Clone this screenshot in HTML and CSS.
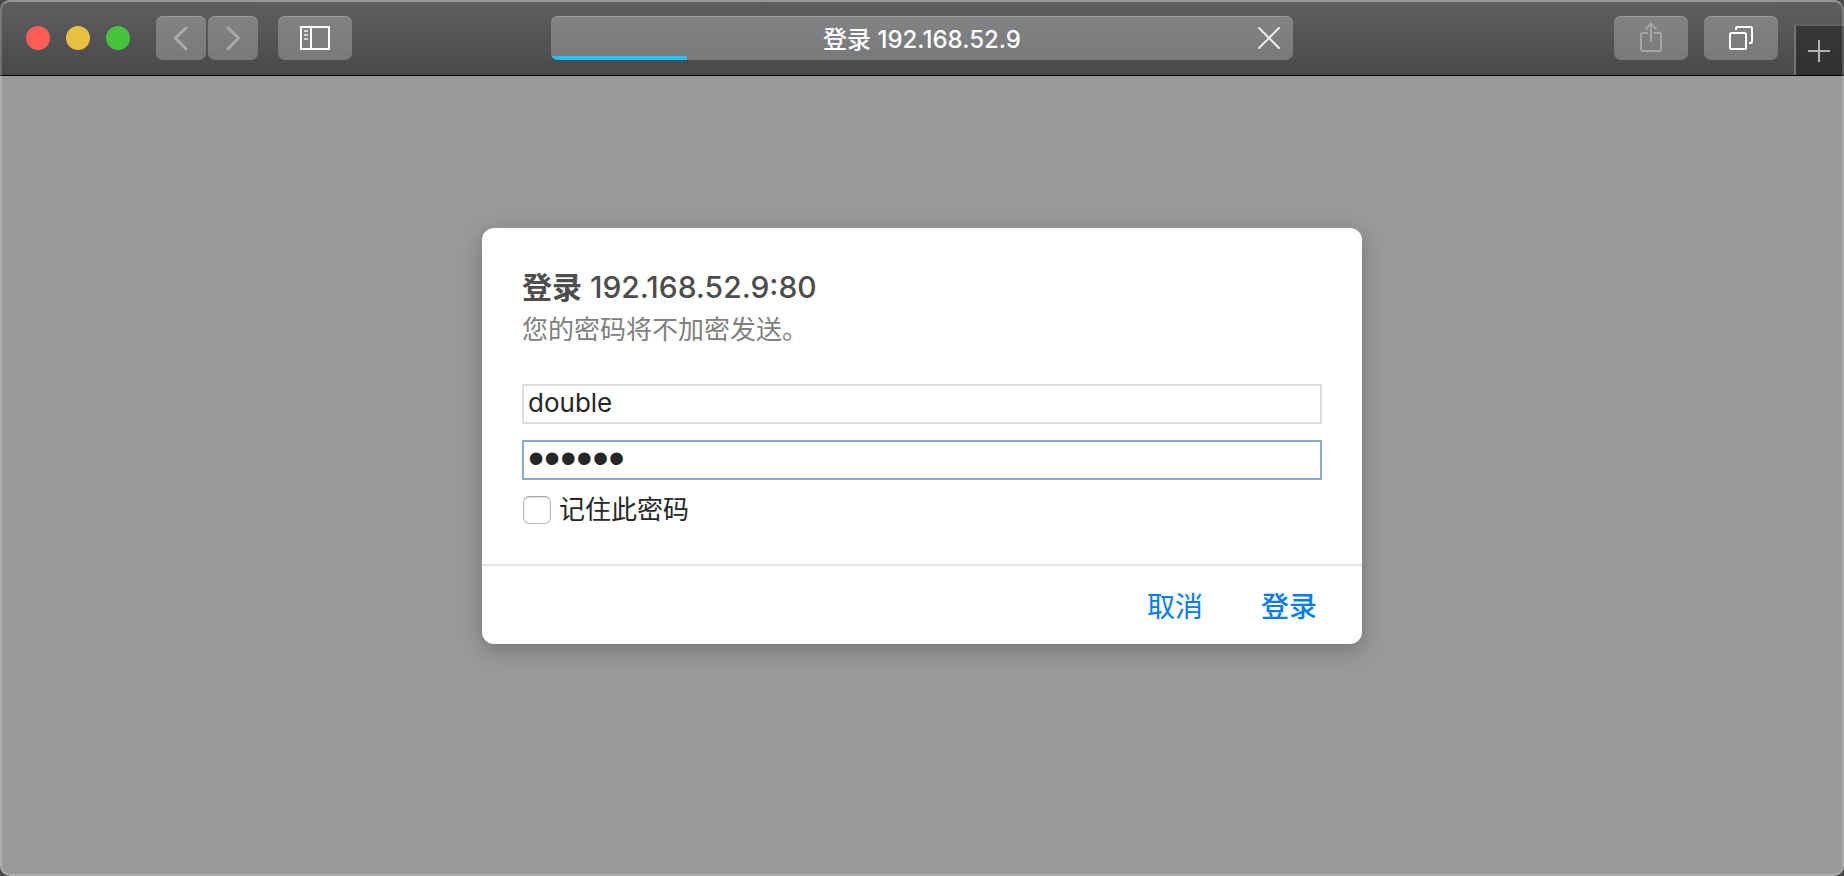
FILE: index.html
```html
<!DOCTYPE html>
<html lang="zh-CN">
<head>
<meta charset="utf-8">
<meta name="viewport" content="width=device-width, initial-scale=1">
<title>登录 192.168.52.9</title>
<link rel="stylesheet" href="styles.css">
</head>
<body>
<div class="window">
  <header class="toolbar">
    <div class="toolbar-left">
      <div class="lights">
        <button class="light light-close" aria-label="关闭"></button>
        <button class="light light-min" aria-label="最小化"></button>
        <button class="light light-zoom" aria-label="缩放"></button>
      </div>
      <div class="nav">
        <button class="tool tool-nav" aria-label="后退">
          <svg width="50" height="44" viewBox="0 0 50 44" fill="none" stroke="#a9aaac" stroke-width="3" stroke-linecap="round"><path d="M30 12 19.500 22 30 33"/></svg>
        </button>
        <button class="tool tool-nav" aria-label="前进">
          <svg width="50" height="44" viewBox="0 0 50 44" fill="none" stroke="#a9aaac" stroke-width="3" stroke-linecap="round"><path d="M20 12 30.500 22 20 33"/></svg>
        </button>
      </div>
      <button class="tool" aria-label="边栏">
        <svg width="74" height="44" viewBox="0 0 74 44" fill="none" stroke="#fff" stroke-width="2"><rect x="23" y="11" width="28" height="22"/><path d="M33 11v22"/><path d="M26 15h4M26 19h4M26 23h4" stroke="#d5d5d6"/></svg>
      </button>
    </div>
    <div class="address">
      <span class="address-text">登录 192.168.52.9</span>
      <button class="stop" aria-label="停止载入">
        <svg width="44" height="44" viewBox="0 0 44 44" fill="none" stroke="#ececec" stroke-width="2" stroke-linecap="round"><path d="M10 12 30 32M30 12 10 32"/></svg>
      </button>
      <span class="progress"></span>
    </div>
    <div class="toolbar-right">
      <button class="tool" aria-label="共享">
        <svg width="74" height="44" viewBox="0 0 74 44" fill="none" stroke="#a5a6a8" stroke-width="2"><path d="M34 17h-5q-2 0-2 2v14q0 2 2 2h16q2 0 2-2V19q0-2-2-2h-5"/><path d="M37 26V8M31.500 13.500 37 7.500l5.500 6" stroke-linejoin="round"/></svg>
      </button>
      <button class="tool" aria-label="标签页概览">
        <svg width="74" height="44" viewBox="0 0 74 44" fill="none" stroke="#fff" stroke-width="2"><rect x="26" y="17" width="16" height="16" rx="1.500"/><path d="M32 14v-1.500q0-1.500 1.500-1.500H46.500q1.500 0 1.500 1.500V25.500q0 1.500-1.500 1.500H45"/></svg>
      </button>
      <button class="new-tab" aria-label="新建标签页">
        <svg width="46" height="48" viewBox="0 0 46 48" fill="none" stroke="#b4b4b4" stroke-width="2"><path d="M12 25h22M23 14v22"/></svg>
      </button>
    </div>
  </header>
  <main class="page">
    <form class="dialog">
      <div class="dialog-body">
        <h1 class="title"><span class="title-verb">登录</span> 192.168.52.9:80</h1>
        <p class="message">您的密码将不加密发送。</p>
        <div class="fields">
          <input class="field" type="text" aria-label="用户名" value="double">
          <input class="field field-active" type="password" aria-label="密码" value="double">
        </div>
        <label class="remember"><input class="check" type="checkbox">记住此密码</label>
      </div>
      <footer class="actions">
        <button class="action" type="button">取消</button>
        <button class="action action-main" type="submit">登录</button>
      </footer>
    </form>
  </main>
</div>
</body>
</html>
```
FILE: styles.css
```css
* {
  box-sizing: border-box;
}

body {
  margin: 0;
  background: #4a4a4a;
  font-family: Inter, "Noto Sans CJK SC", sans-serif;
}

button {
  padding: 0;
  border: 0;
  background: none;
  font: inherit;
}

svg {
  display: block;
}

.window {
  position: relative;
  display: flex;
  flex-direction: column;
  min-height: 100vh;
  overflow: hidden;
  border-radius: 10px;
  background: #999;
}

.window::after {
  content: "";
  position: absolute;
  inset: 0;
  border: 2px solid rgba(255, 255, 255, 0.2);
  border-top-color: rgba(255, 255, 255, 0.35);
  border-radius: 10px;
  pointer-events: none;
}

.toolbar {
  display: grid;
  grid-template-columns: 1fr minmax(240px, 742px) 1fr;
  align-items: center;
  height: 76px;
  border-bottom: 1px solid #000;
  background: linear-gradient(#5e5f61, #48494b);
}

.toolbar-left,
.toolbar-right {
  display: flex;
  align-items: center;
}

.toolbar-left {
  gap: 20px;
  padding-left: 26px;
}

.toolbar-right {
  justify-content: flex-end;
  align-self: stretch;
  gap: 16px;
}

.lights {
  display: flex;
  gap: 16px;
  margin-right: 6px;
}

.light {
  width: 24px;
  height: 24px;
  border-radius: 50%;
}

.light-close {
  background: #ff5b57;
}

.light-min {
  background: #e6c041;
}

.light-zoom {
  background: #46c43c;
}

.nav {
  display: flex;
  gap: 2px;
}

.tool,
.address {
  height: 44px;
  border-radius: 7px;
  background: linear-gradient(#828385, #78797b);
  box-shadow: inset 0 1px #98999b;
}

.tool {
  flex: none;
  width: 74px;
}

.tool-nav {
  width: 50px;
}

.address {
  position: relative;
  display: flex;
  align-items: center;
  justify-content: center;
  overflow: hidden;
  color: #fff;
  font-size: 24px;
  font-weight: 500;
}

.stop {
  position: absolute;
  top: 0;
  right: 0;
}

.progress {
  position: absolute;
  bottom: 0;
  left: 0;
  width: 136px;
  height: 4px;
  background: #1bc4fb;
}

.new-tab {
  align-self: flex-end;
  width: 50px;
  height: 51px;
  border-top: 2px solid #606163;
  border-left: 2px solid #737476;
  background: linear-gradient(#38393b, #2f3032);
}

.new-tab svg {
  margin-bottom: 2px;
}

.page {
  display: flex;
  flex: 1;
  align-items: flex-start;
  justify-content: center;
  padding: 152px 20px 40px;
}

.dialog {
  width: 880px;
  border-radius: 12px;
  background: #fff;
  box-shadow: 0 6px 20px rgba(0, 0, 0, 0.24);
}

.dialog-body {
  padding: 38px 40px 32px;
}

.title {
  margin: 0;
  color: #4d4d4d;
  font-size: 30px;
  font-weight: 500;
  line-height: 42px;
}

.title-verb {
  font-weight: 700;
}

.message {
  margin: 0;
  color: #808080;
  font-size: 26px;
  line-height: 44px;
}

.fields {
  display: grid;
  gap: 16px;
  margin-top: 32px;
}

.field {
  width: 100%;
  height: 40px;
  padding: 0 4px 4px;
  border: 2px solid #ddd;
  outline: 0;
  background: #fff;
  color: #262626;
  font-family: Inter, "Noto Sans CJK SC", sans-serif;
  font-size: 26px;
}

.field-active {
  border-color: #8aa6cc;
  font-family: "Liberation Sans", sans-serif;
  font-size: 46px;
}

.remember {
  display: flex;
  align-items: center;
  gap: 8px;
  margin-top: 8px;
  color: #262626;
  font-size: 26px;
  line-height: 44px;
}

.check {
  width: 28px;
  height: 28px;
  margin: 0 0 0 1px;
  border: 1px solid #bbb;
  border-top-color: #a5a5a5;
  border-radius: 6px;
  background: #fff;
  box-shadow: inset 0 1px 2px rgba(0, 0, 0, 0.15);
  appearance: none;
}

.actions {
  display: flex;
  align-items: center;
  justify-content: flex-end;
  gap: 58px;
  height: 80px;
  padding: 4px 45px 0 0;
  border-top: 2px solid #e4e4e4;
}

.action {
  color: #007aff;
  font-size: 28px;
  line-height: 40px;
}

.action-main {
  font-weight: 500;
}
```
